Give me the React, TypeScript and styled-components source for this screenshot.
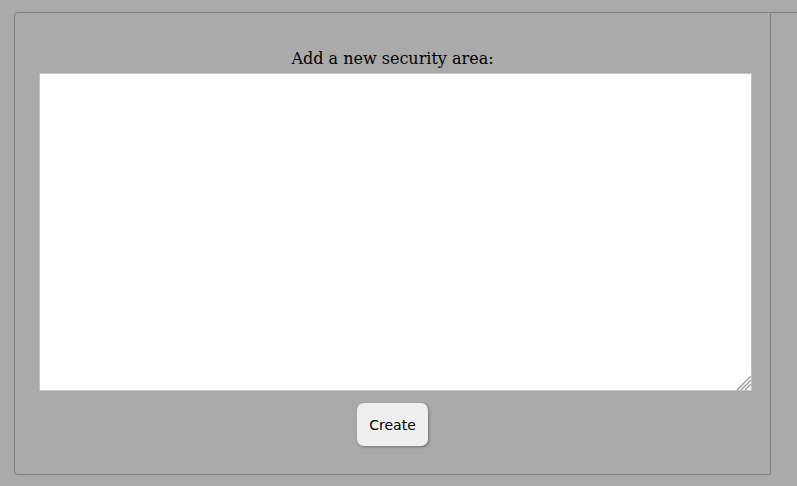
import React from "react";
import styled, { createGlobalStyle } from "styled-components";

const Global = createGlobalStyle`
  html, body { margin: 0; padding: 0; background: #aaaaaa; }
  body { font-family: "DejaVu Serif", serif; }
`;

const Page = styled.div`
  display: flex;
  padding: 12px 0 0 14px;
  height: 486px;
  box-sizing: border-box;
`;

const Panel = styled.div`
  width: 757px;
  height: 463px;
  box-sizing: border-box;
  border: 1px solid #7f7f7f;
  border-radius: 4px 0 0 4px;
  display: flex;
  flex-direction: column;
  align-items: center;
  padding-top: 36px;
`;

const Rest = styled.div`
  flex: 1;
  border-top: 1px solid #7f7f7f;
  height: 0;
`;

const Label = styled.label`
  display: block;
  font-family: "DejaVu Serif", serif;
  font-size: 16px;
  line-height: 19px;
  color: #000;
  margin-bottom: 5px;
`;

const AreaWrap = styled.div`
  position: relative;
  margin-left: 6px;
  width: 713px;
  height: 318px;
`;

const Area = styled.textarea`
  display: block;
  width: 100%;
  height: 100%;
  box-sizing: border-box;
  margin: 0;
  border: 1px solid #c4c0bb;
  background: #fff;
  resize: none;
  outline: none;
`;

const Grip = styled.svg`
  position: absolute;
  right: 1px;
  bottom: 1px;
  width: 15px;
  height: 15px;
  pointer-events: none;
`;

const Button = styled.button`
  margin-top: 12px;
  width: 71px;
  height: 43px;
  border: none;
  border-radius: 7px;
  background: #efefef;
  box-shadow: 1px 1px 3px rgba(0, 0, 0, 0.35);
  font-family: "DejaVu Sans", sans-serif;
  font-size: 14px;
  color: #000;
`;

export default function App() {
  return (
    <>
      <Global />
      <Page>
        <Panel>
          <Label htmlFor="area">Add a new security area:</Label>
          <AreaWrap>
            <Area id="area" />
            <Grip viewBox="0 0 15 15">
              <g stroke="#a0a0a0" strokeWidth="1.5">
                <line x1="1" y1="15" x2="15" y2="1" />
                <line x1="5" y1="15" x2="15" y2="5" />
                <line x1="9" y1="15" x2="15" y2="9" />
              </g>
            </Grip>
          </AreaWrap>
          <Button>Create</Button>
        </Panel>
        <Rest />
      </Page>
    </>
  );
}
